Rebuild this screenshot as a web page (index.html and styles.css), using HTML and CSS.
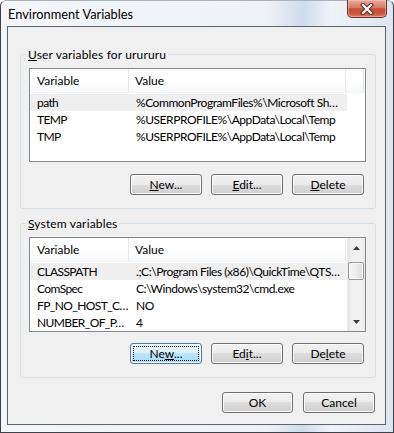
FILE: index.html
```html
<!DOCTYPE html>
<html lang="en">
<head>
    <meta charset="UTF-8">
    <meta name="viewport" content="width=device-width, initial-scale=1.0">
    <title>Environment Variables</title>
    <link rel="stylesheet" href="styles.css">
</head>
<body>
    <div class="window">
        <div class="titlebar">
            <span class="title">Environment Variables</span>
            <button class="close-btn" aria-label="Close">
                <svg width="14" height="12" viewBox="0 0 14 12">
                    <path d="M3 2 L11 10 M11 2 L3 10" stroke="#5a2a24" stroke-width="4.2" stroke-linecap="square" fill="none"/>
                    <path d="M3 2 L11 10 M11 2 L3 10" stroke="#ffffff" stroke-width="2.2" stroke-linecap="square" fill="none"/>
                </svg>
            </button>
        </div>

        <div class="client">
            <fieldset class="group">
                <legend><u>U</u>ser variables for urururu</legend>
                <div class="listview list-user">
                    <div class="lv-main">
                        <div class="lv-header">
                            <div class="hcol col-name">Variable</div>
                            <div class="hcol col-value">Value</div>
                        </div>
                        <div class="lv-row selected">
                            <span class="col-name">path</span>
                            <span class="col-value">%CommonProgramFiles%\Microsoft Sh…</span>
                        </div>
                        <div class="lv-row">
                            <span class="col-name">TEMP</span>
                            <span class="col-value">%USERPROFILE%\AppData\Local\Temp</span>
                        </div>
                        <div class="lv-row">
                            <span class="col-name">TMP</span>
                            <span class="col-value">%USERPROFILE%\AppData\Local\Temp</span>
                        </div>
                    </div>
                </div>
                <div class="btn-row">
                    <button class="btn"><u>N</u>ew...</button>
                    <button class="btn"><u>E</u>dit...</button>
                    <button class="btn"><u>D</u>elete</button>
                </div>
            </fieldset>

            <fieldset class="group group-system">
                <legend><u>S</u>ystem variables</legend>
                <div class="listview list-system">
                    <div class="lv-main">
                        <div class="lv-header">
                            <div class="hcol col-name">Variable</div>
                            <div class="hcol col-value">Value</div>
                        </div>
                        <div class="lv-row selected">
                            <span class="col-name">CLASSPATH</span>
                            <span class="col-value">.;C:\Program Files (x86)\QuickTime\QTS…</span>
                        </div>
                        <div class="lv-row">
                            <span class="col-name">ComSpec</span>
                            <span class="col-value">C:\Windows\system32\cmd.exe</span>
                        </div>
                        <div class="lv-row">
                            <span class="col-name">FP_NO_HOST_C…</span>
                            <span class="col-value">NO</span>
                        </div>
                        <div class="lv-row">
                            <span class="col-name">NUMBER_OF_P…</span>
                            <span class="col-value">4</span>
                        </div>
                    </div>
                    <div class="scrollbar">
                        <div class="sb-arrow">
                            <svg width="7" height="4" viewBox="0 0 7 4"><path d="M3.5 0 L7 4 L0 4 Z" fill="#3d3d3d"/></svg>
                        </div>
                        <div class="sb-thumb"></div>
                        <div class="sb-track"></div>
                        <div class="sb-arrow">
                            <svg width="7" height="4" viewBox="0 0 7 4"><path d="M0 0 L7 0 L3.5 4 Z" fill="#3d3d3d"/></svg>
                        </div>
                    </div>
                </div>
                <div class="btn-row btn-row-system">
                    <button class="btn btn-focus"><span class="focus-ring">Ne<u>w</u>...</span></button>
                    <button class="btn">Ed<u>i</u>t...</button>
                    <button class="btn">De<u>l</u>ete</button>
                </div>
            </fieldset>

            <div class="dialog-buttons">
                <button class="btn btn-dialog">OK</button>
                <button class="btn btn-dialog">Cancel</button>
            </div>
        </div>
    </div>
</body>
</html>
```

FILE: styles.css
```css
:root {
    --client-bg: #f0f0f0;
    --group-line: #d5dfe5;
    --list-border: #828790;
    --row-selected: #efefef;
    --header-line: #e3e8ee;
}

body {
    margin: 0;
    background-color: #ffffff;
    font-family: 'Lato', 'Liberation Sans', sans-serif;
    font-size: 12px;
    color: #000000;
}

/* window frame */
.window {
    width: 394px;
    height: 433px;
    box-sizing: border-box;
    border: 1px solid #3d4046;
    border-top-color: #a9b3bd;
    border-radius: 6px 6px 0 0;
    background: linear-gradient(to right, #f4f6f9 0%, #eef2f6 68%, #cfdceb 77%, #eef3f8 84%, #dce6f1 100%);
    display: flex;
    flex-direction: column;
}

.titlebar {
    height: 25px;
    flex: none;
    display: flex;
    justify-content: space-between;
    align-items: flex-start;
    padding-left: 7px;
}

.title {
    font-size: 12.8px;
    line-height: 27px;
    color: #000000;
}

.close-btn {
    width: 40px;
    height: 18px;
    margin-top: -1px;
    margin-right: 6px;
    padding: 0;
    border: 1px solid #6f3028;
    border-top: none;
    border-radius: 0 0 5px 5px;
    background: linear-gradient(#e9a99b 0%, #d77a66 45%, #c54b34 52%, #c9583f 80%, #d9806a 100%);
    box-shadow: inset 0 0 0 1px rgba(255, 210, 200, 0.45);
    display: flex;
    align-items: center;
    justify-content: center;
}

.client {
    height: 399px;
    flex: none;
    box-sizing: border-box;
    margin: 0 7px 0 6px;
    border: 1px solid #5e646c;
    background-color: var(--client-bg);
    padding: 20px 9px 0 12px;
}

/* group boxes */
.group {
    margin: 0;
    min-width: 0;
    padding: 6px 9px 13px 8px;
    border: 1px solid var(--group-line);
    border-radius: 3px;
}

.group-system {
    margin-top: 7px;
}

.group legend {
    padding: 0 2px;
    margin-left: -3px;
    line-height: 15px;
    letter-spacing: 0.15px;
}

/* list views */
.listview {
    box-sizing: border-box;
    height: 94px;
    border: 1px solid var(--list-border);
    background-color: #ffffff;
    display: flex;
    overflow: hidden;
}

.list-system {
    height: 95px;
}

.lv-main {
    flex: 1;
    min-width: 0;
}

.lv-header {
    height: 24px;
    margin-bottom: 1px;
    display: flex;
    background: linear-gradient(#ffffff 0%, #ffffff 55%, #f7f8fa 100%);
    border-bottom: 1px solid #f2f4f6;
    box-sizing: border-box;
}

.list-user .lv-header::after {
    content: '';
    width: 17px;
    border-right: 1px solid var(--header-line);
}

.hcol {
    box-sizing: border-box;
    line-height: 23px;
    padding-left: 7px;
    border-right: 1px solid var(--header-line);
    white-space: nowrap;
}

.hcol.col-name {
    width: 99px;
}

.hcol.col-value {
    width: 217px;
    padding-left: 6px;
}

.lv-row {
    height: 17px;
    width: 317px;
    display: flex;
    line-height: 18px;
    white-space: nowrap;
}

.lv-row.selected {
    background-color: var(--row-selected);
}

.lv-row .col-name {
    width: 99px;
    box-sizing: border-box;
    padding-left: 7px;
    overflow: hidden;
    letter-spacing: -0.6px;
}

.lv-row .col-value {
    width: 218px;
    box-sizing: border-box;
    padding-left: 7px;
    overflow: hidden;
    letter-spacing: -0.45px;
}

/* scrollbar */
.scrollbar {
    width: 17px;
    flex: none;
    display: flex;
    flex-direction: column;
    background: linear-gradient(to right, #e3e3e3 0%, #f1f1f1 20%, #f1f1f1 80%, #e8e8e8 100%);
    border-left: 1px solid #ececec;
}

.sb-arrow {
    height: 19px;
    display: flex;
    align-items: center;
    justify-content: center;
}

.sb-thumb {
    height: 16px;
    margin: 5px 1px 0 0;
    border: 1px solid #979797;
    border-radius: 2px;
    background: linear-gradient(to right, #f5f5f5 0%, #ececec 50%, #dcdcdc 100%);
    box-shadow: inset 0 0 0 1px #fbfbfb;
}

.sb-track {
    flex: 1;
}

/* buttons */
.btn-row {
    margin-top: 12px;
    display: flex;
    justify-content: flex-end;
    gap: 9px;
    padding-right: 2px;
}

.btn-row-system {
    margin-top: 11px;
}

.btn {
    width: 72px;
    height: 21px;
    padding: 0;
    border: 1px solid #707070;
    border-radius: 3px;
    background: linear-gradient(#f2f2f2 0%, #ebebeb 50%, #dddddd 50%, #cfcfcf 100%);
    box-shadow: inset 0 0 0 1px #fcfcfc;
    font-family: inherit;
    font-size: 12px;
    color: #000000;
    line-height: 18px;
}

.btn-focus {
    border-color: #3c7fb1;
    background: linear-gradient(#eaf6fd 0%, #d9f0fc 50%, #bee6fd 50%, #a7d9f5 100%);
    padding: 2px;
}

.focus-ring {
    display: block;
    height: 15px;
    line-height: 14px;
    box-sizing: border-box;
    border: 1px dotted #000000;
}

.dialog-buttons {
    margin-top: 14px;
    display: flex;
    justify-content: flex-end;
    gap: 10px;
    padding-right: 1px;
}

.btn-dialog {
    width: 71px;
}

.btn-dialog + .btn-dialog {
    width: 72px;
}
```
